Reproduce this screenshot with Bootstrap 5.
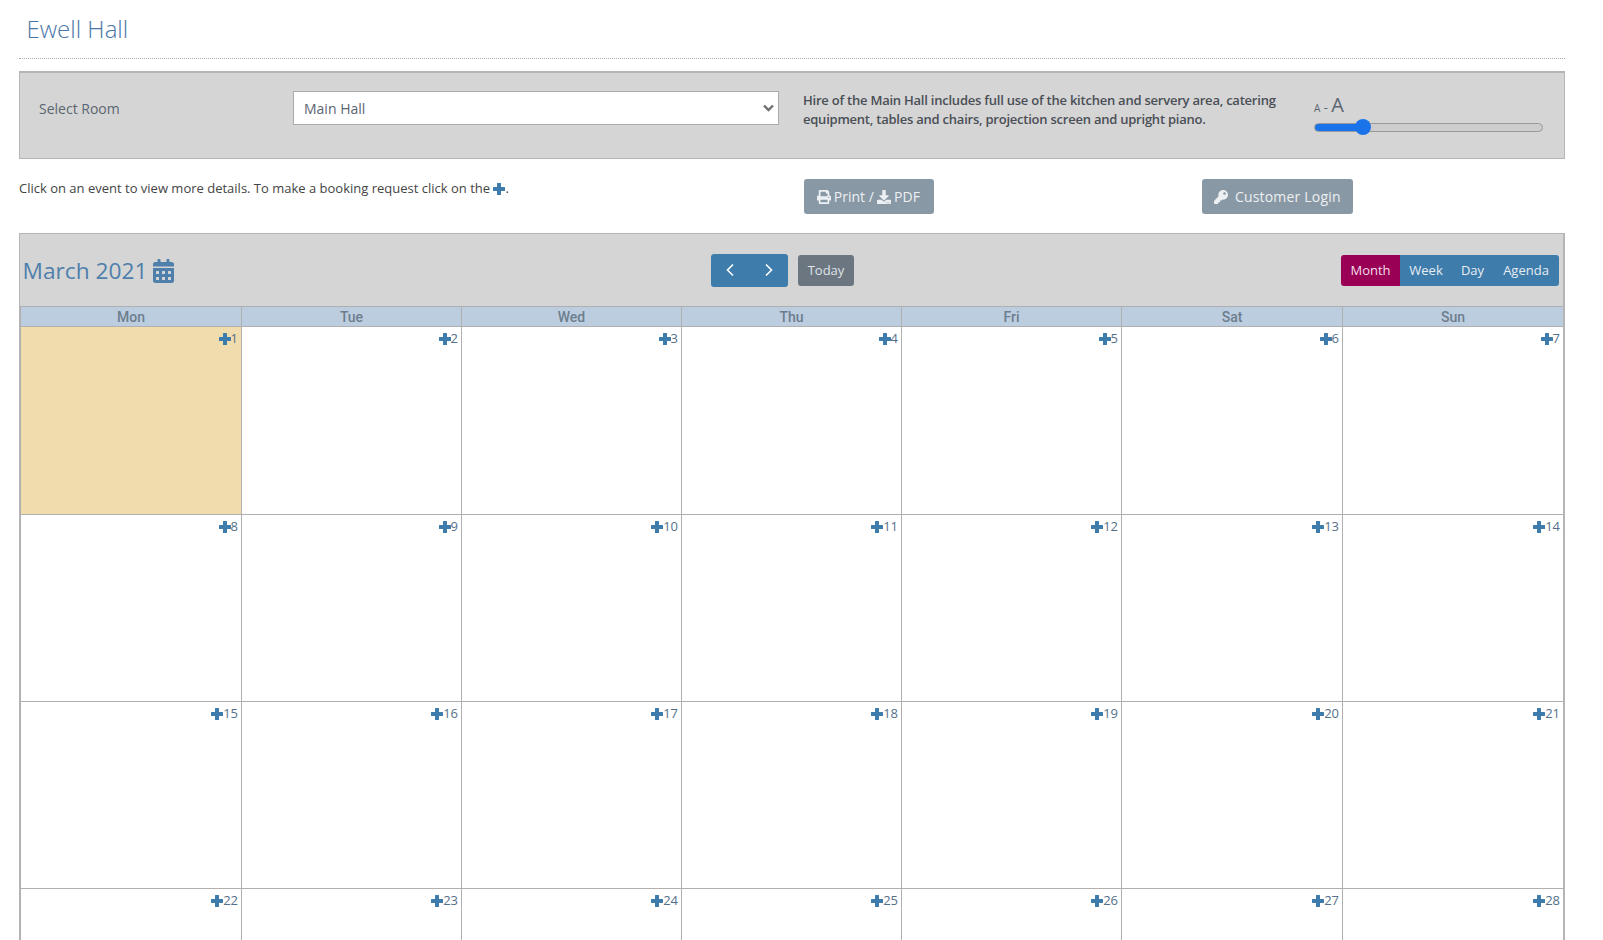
<!DOCTYPE html>
<html lang="en">
<head>
<meta charset="utf-8">
<title>Ewell Hall</title>
<link href="https://cdn.jsdelivr.net/npm/bootstrap@5.3.0/dist/css/bootstrap.min.css" rel="stylesheet">
<style>
html,body{height:940px;overflow:hidden;background:#fff}
body{font-family:"Open Sans","Liberation Sans",sans-serif;font-size:13px;color:#444}
.ico{display:inline-block;fill:currentColor;vertical-align:-2px}
.shell{width:1546px;margin-left:19px}
.hall-title{font-size:24px;font-weight:300;color:#4a78a6;margin:0;padding:12px 8px 12px 7.5px;line-height:34px;border-bottom:1px dotted #aaa;height:59px}
.room-panel{margin-top:12px;height:88px;background:#d5d5d5;border:1px solid #b5b5b5;border-top-width:2px;padding:18px 20px 0 19px}
.room-label{flex:none;width:254px;font-size:14px;color:#5b6570;line-height:36px}
.room-select{flex:none;width:486px;height:34px;border:1px solid #aaa;border-radius:0;font-size:14px;color:#5b6570;padding:0 20px 0 10px;font-family:inherit;background-image:url("data:image/svg+xml,%3Csvg xmlns='http://www.w3.org/2000/svg' viewBox='0 0 11 8'%3E%3Cpath d='M1 1.5l4.5 4.5L10 1.5' fill='none' stroke='%23707070' stroke-width='2.4'/%3E%3C/svg%3E");background-position:right 4px center;background-size:11px 8px}
.room-note{flex:none;width:480px;margin-left:24px;font-size:13px;font-weight:600;letter-spacing:-.23px;line-height:19px;color:#4a4f55}
.size-box{flex:none;margin-left:31px;width:229px}
.size-label{line-height:28px;color:#5b6570;height:28px;white-space:nowrap}
.size-small{font-size:10px}
.size-big{font-size:20px}
.size-range{-webkit-appearance:none;appearance:none;display:block;width:229px;height:16px;margin:0;background:transparent;--v:49px}
.size-range::-webkit-slider-runnable-track{height:9px;border-radius:5px;border:1px solid #999;background:linear-gradient(to right,#1a73e8 var(--v),#cdcdcd var(--v))}
.size-range::-webkit-slider-thumb{-webkit-appearance:none;width:16px;height:16px;border-radius:50%;background:#1a73e8;margin-top:-4.5px;border:0}
.tool-row{height:74px;padding-top:20px}
.tool-text{flex:none;width:785px;line-height:18px;color:#444}
.tool-plus{color:#3e7cab}
.btn-slate{background:#8998a5;color:#edf0f2;border:0;border-radius:3px;font-size:14px;height:35px;padding:0 12px;line-height:35px;flex:none;white-space:nowrap}
.btn-slate:hover{background:#8998a5;color:#edf0f2}
.btn-slate .ico{margin-right:-1px}
.print-btn{width:130px;padding-left:11px}
.login-btn{width:151px;margin-left:268px;letter-spacing:.2px}
.cal-frame{background:#d5d5d5;border:1px solid #b5b5b5;border-bottom:0;border-right-width:2px;height:720px;overflow:hidden}
.cal-head{height:72px;padding:0 4px 0 2.5px}
.cal-title{font-size:22.7px;color:#4f7fab;width:688.5px;line-height:72px;margin-top:2px;white-space:nowrap}
.btn-nav{background:#3e7cab;color:#fff;border:0;height:33px;width:39px;padding:0;display:flex;align-items:center;justify-content:center;border-radius:0}
.btn-nav:hover,.view-btn:hover{background:#3e7cab;color:#fff}
.nav-l{border-radius:3px 0 0 3px}
.nav-r{border-radius:0 3px 3px 0}
.today-btn{background:#6c7681;color:#dfe3e6;border:0;height:31px;width:56px;margin-left:10px;padding:2px 0 0;font-size:13px;border-radius:3px}
.today-btn:hover{background:#6c7681;color:#dfe3e6}
.view-group{margin-left:auto;display:flex;height:31px}
.view-btn{background:#3e7cab;color:#e6edf3;border:0;font-size:13px;height:31px;padding:2px 0 0;border-radius:0}
.view-on,.view-on:hover{background:#990055;color:#f0dfe8;width:59px;border-radius:3px 0 0 3px}
.v-week{width:52px}.v-day{width:41px}.v-agenda{width:66px;border-radius:0 3px 3px 0}
.cal-grid,.dow-row{display:grid;grid-template-columns:221px 220px 220px 220px 220px 221px 221px}
.cal-grid{grid-template-rows:188px 187px 187px 187px;background:#fff}
.dow-row{height:21px;background:#bccddf;border-top:1px solid #b0b0b0;border-bottom:1px solid #b0b0b0}
.dow{font-family:Roboto,"Liberation Sans",sans-serif;font-weight:500;font-size:14px;line-height:20px;text-align:center;color:#6d7e8e;border-left:1px solid #b0b0b0}
.day{background:#fff;border-left:1px solid #b0b0b0;border-bottom:1px solid #b0b0b0;text-align:right;padding:2px 3px 0 0;font-size:13px;line-height:18px;color:#54708a}
.day-now{background:#f1dcae}
.day .ico{color:#3e7cab;width:12px;height:12px;vertical-align:-1.5px}
</style>
</head>
<body>
<svg width="0" height="0" class="d-none">
<symbol id="i-plus" viewBox="0 0 12 12"><path d="M4.5 0h3q.5 0 .5.5V4h3.5q.5 0 .5.5v3q0 .5-.5.5H8v3.500q0 .5-.5.5h-3q-.5 0-.5-.5V8H.5Q0 8 0 7.500v-3Q0 4 .5 4H4V.5Q4 0 4.500 0z"/></symbol>
<symbol id="i-print" viewBox="0 0 512 512"><path d="M448 192V77.25c0-8.49-3.37-16.62-9.37-22.63L393.37 9.37c-6-6-14.14-9.37-22.63-9.37H96C78.33 0 64 14.33 64 32v160c-35.35 0-64 28.65-64 64v112c0 8.84 7.16 16 16 16h48v96c0 17.67 14.33 32 32 32h320c17.67 0 32-14.33 32-32v-96h48c8.84 0 16-7.16 16-16V256c0-35.35-28.65-64-64-64zm-64 256H128v-96h256v96zm0-224H128V64h192v48c0 8.84 7.16 16 16 16h48v96zm48 72c-13.25 0-24-10.75-24-24 0-13.26 10.75-24 24-24s24 10.74 24 24c0 13.25-10.75 24-24 24z"/></symbol>
<symbol id="i-down" viewBox="0 0 512 512"><path d="M216 0h80c13.3 0 24 10.7 24 24v168h87.7c17.8 0 26.7 21.5 14.1 34.1L269.7 378.3c-7.5 7.5-19.8 7.5-27.3 0L90.1 226.1c-12.6-12.6-3.7-34.1 14.1-34.1H192V24c0-13.3 10.7-24 24-24zm296 376v112c0 13.3-10.7 24-24 24H24c-13.3 0-24-10.7-24-24V376c0-13.3 10.7-24 24-24h146.7l49 49c20.1 20.1 52.5 20.1 72.6 0l49-49H488c13.3 0 24 10.7 24 24zm-124 88c0-11-9-20-20-20s-20 9-20 20 9 20 20 20 20-9 20-20zm64 0c0-11-9-20-20-20s-20 9-20 20 9 20 20 20 20-9 20-20z"/></symbol>
<symbol id="i-key" viewBox="0 0 512 512"><path d="M512 176.001C512 273.203 433.202 352 336 352c-11.22 0-22.19-1.062-32.827-3.069l-24.012 27.014A23.999 23.999 0 0 1 261.223 384H224v40c0 13.255-10.745 24-24 24h-40v40c0 13.255-10.745 24-24 24H24c-13.255 0-24-10.745-24-24v-78.059c0-6.365 2.529-12.47 7.029-16.971l161.802-161.802C163.108 213.814 160 195.271 160 176 160 78.798 238.797.001 335.999 0 433.488-.001 512 78.511 512 176.001zM336 128c0 26.510 21.490 48 48 48s48-21.490 48-48-21.490-48-48-48-48 21.490-48 48z"/></symbol>
<symbol id="i-cal" viewBox="0 0 448 512"><path d="M0 464c0 26.5 21.5 48 48 48h352c26.5 0 48-21.5 48-48V192H0v272zm320-196c0-6.6 5.4-12 12-12h40c6.6 0 12 5.4 12 12v40c0 6.6-5.4 12-12 12h-40c-6.6 0-12-5.4-12-12v-40zm0 128c0-6.6 5.4-12 12-12h40c6.6 0 12 5.4 12 12v40c0 6.6-5.4 12-12 12h-40c-6.6 0-12-5.4-12-12v-40zM192 268c0-6.6 5.4-12 12-12h40c6.6 0 12 5.4 12 12v40c0 6.6-5.4 12-12 12h-40c-6.6 0-12-5.4-12-12v-40zm0 128c0-6.6 5.4-12 12-12h40c6.6 0 12 5.4 12 12v40c0 6.6-5.4 12-12 12h-40c-6.6 0-12-5.4-12-12v-40zM64 268c0-6.6 5.4-12 12-12h40c6.6 0 12 5.4 12 12v40c0 6.6-5.4 12-12 12H76c-6.6 0-12-5.4-12-12v-40zm0 128c0-6.6 5.4-12 12-12h40c6.6 0 12 5.4 12 12v40c0 6.6-5.4 12-12 12H76c-6.6 0-12-5.4-12-12v-40zM400 64h-48V16c0-8.8-7.2-16-16-16h-32c-8.8 0-16 7.2-16 16v48H160V16c0-8.8-7.2-16-16-16h-32c-8.8 0-16 7.2-16 16v48H48C21.5 64 0 85.5 0 112v48h448v-48c0-26.5-21.5-48-48-48z"/></symbol>
</svg>
<div class="shell">
  <h1 class="hall-title">Ewell Hall</h1>
  <div class="room-panel d-flex align-items-start">
    <label class="room-label" for="roomSel">Select Room</label>
    <select id="roomSel" class="form-select room-select"><option>Main Hall</option></select>
    <div class="room-note">Hire of the Main Hall includes full use of the kitchen and servery area, catering equipment, tables and chairs, projection screen and upright piano.</div>
    <div class="size-box">
      <div class="size-label"><span class="size-small">A</span> - <span class="size-big">A</span></div>
      <input class="size-range" type="range" min="0" max="100" value="19" aria-label="Text size">
    </div>
  </div>
  <div class="tool-row d-flex align-items-start">
    <div class="tool-text">Click on an event to view more details. To make a booking request click on the <svg class="ico tool-plus" width="12" height="12"><use href="#i-plus"/></svg>.</div>
    <a class="btn btn-slate print-btn" href="#"><svg class="ico" width="14" height="14"><use href="#i-print"/></svg> Print / <svg class="ico" width="14" height="14"><use href="#i-down"/></svg> PDF</a>
    <a class="btn btn-slate login-btn" href="#"><svg class="ico" width="14" height="14"><use href="#i-key"/></svg>&nbsp; Customer Login</a>
  </div>
  <div class="cal-frame">
    <div class="cal-head d-flex align-items-center">
      <div class="cal-title">March 2021 <svg class="ico" width="21" height="24" style="vertical-align:-4px"><use href="#i-cal"/></svg></div>
      <div class="btn-group">
        <button class="btn btn-nav nav-l" type="button" aria-label="Previous"><svg width="11" height="14" viewBox="0 0 11 14"><polyline points="8,1.5 2.5,7 8,12.5" fill="none" stroke="#fff" stroke-width="1.6"/></svg></button>
        <button class="btn btn-nav nav-r" type="button" aria-label="Next"><svg width="11" height="14" viewBox="0 0 11 14"><polyline points="3,1.5 8.5,7 3,12.5" fill="none" stroke="#fff" stroke-width="1.6"/></svg></button>
      </div>
      <button class="btn today-btn" type="button">Today</button>
      <div class="view-group">
        <button class="btn view-btn view-on" type="button">Month</button>
        <button class="btn view-btn v-week" type="button">Week</button>
        <button class="btn view-btn v-day" type="button">Day</button>
        <button class="btn view-btn v-agenda" type="button">Agenda</button>
      </div>
    </div>
    <div class="dow-row">
      <div class="dow">Mon</div><div class="dow">Tue</div><div class="dow">Wed</div><div class="dow">Thu</div><div class="dow">Fri</div><div class="dow">Sat</div><div class="dow">Sun</div>
    </div>
    <div class="cal-grid" id="calGrid">
      <div class="day day-now"><svg class="ico"><use href="#i-plus"/></svg>1</div>
      <div class="day"><svg class="ico"><use href="#i-plus"/></svg>2</div>
      <div class="day"><svg class="ico"><use href="#i-plus"/></svg>3</div>
      <div class="day"><svg class="ico"><use href="#i-plus"/></svg>4</div>
      <div class="day"><svg class="ico"><use href="#i-plus"/></svg>5</div>
      <div class="day"><svg class="ico"><use href="#i-plus"/></svg>6</div>
      <div class="day"><svg class="ico"><use href="#i-plus"/></svg>7</div>
      <div class="day"><svg class="ico"><use href="#i-plus"/></svg>8</div>
      <div class="day"><svg class="ico"><use href="#i-plus"/></svg>9</div>
      <div class="day"><svg class="ico"><use href="#i-plus"/></svg>10</div>
      <div class="day"><svg class="ico"><use href="#i-plus"/></svg>11</div>
      <div class="day"><svg class="ico"><use href="#i-plus"/></svg>12</div>
      <div class="day"><svg class="ico"><use href="#i-plus"/></svg>13</div>
      <div class="day"><svg class="ico"><use href="#i-plus"/></svg>14</div>
      <div class="day"><svg class="ico"><use href="#i-plus"/></svg>15</div>
      <div class="day"><svg class="ico"><use href="#i-plus"/></svg>16</div>
      <div class="day"><svg class="ico"><use href="#i-plus"/></svg>17</div>
      <div class="day"><svg class="ico"><use href="#i-plus"/></svg>18</div>
      <div class="day"><svg class="ico"><use href="#i-plus"/></svg>19</div>
      <div class="day"><svg class="ico"><use href="#i-plus"/></svg>20</div>
      <div class="day"><svg class="ico"><use href="#i-plus"/></svg>21</div>
      <div class="day"><svg class="ico"><use href="#i-plus"/></svg>22</div>
      <div class="day"><svg class="ico"><use href="#i-plus"/></svg>23</div>
      <div class="day"><svg class="ico"><use href="#i-plus"/></svg>24</div>
      <div class="day"><svg class="ico"><use href="#i-plus"/></svg>25</div>
      <div class="day"><svg class="ico"><use href="#i-plus"/></svg>26</div>
      <div class="day"><svg class="ico"><use href="#i-plus"/></svg>27</div>
      <div class="day"><svg class="ico"><use href="#i-plus"/></svg>28</div>
    </div>
  </div>
</div>
</body>
</html>
